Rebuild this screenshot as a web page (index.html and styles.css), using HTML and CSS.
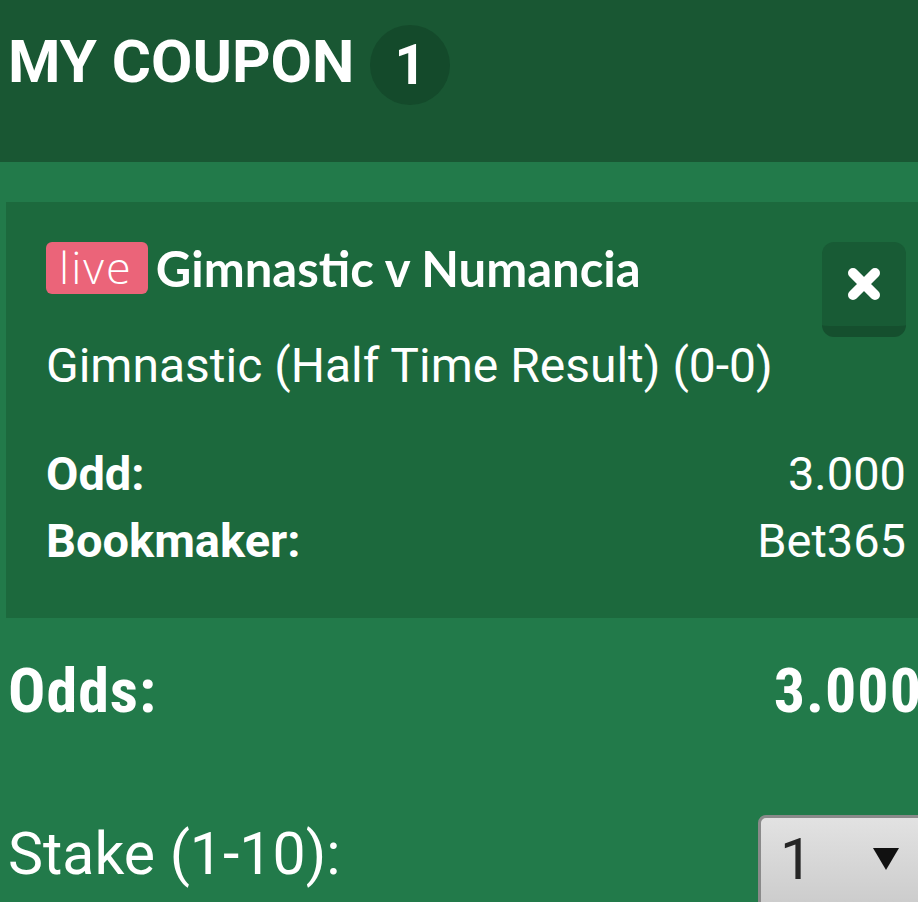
FILE: index.html
```html
<!DOCTYPE html>
<html lang="en">
<head>
<meta charset="utf-8">
<title>My Coupon</title>
<link rel="stylesheet" href="styles.css">
</head>
<body>
<div class="page">
  <header class="header">
    <h1 class="title">MY COUPON</h1>
    <span class="count">1</span>
  </header>

  <section class="card">
    <div class="card-top">
      <div class="card-info">
        <div class="match">
          <span class="live">live</span>
          <span class="match-name">Gimnastic v Numancia</span>
        </div>
        <div class="selection">Gimnastic (Half Time Result) (0-0)</div>
      </div>
      <button class="remove" type="button" aria-label="Remove">
        <svg viewBox="0 0 34 34" width="34" height="34">
          <path d="M6 6 L28 28 M28 6 L6 28" stroke="#ffffff" stroke-width="10" stroke-linecap="round" fill="none"/>
        </svg>
      </button>
    </div>
    <div class="details">
      <div class="row"><span class="label">Odd:</span><span class="value">3.000</span></div>
      <div class="row"><span class="label">Bookmaker:</span><span class="value">Bet365</span></div>
    </div>
  </section>

  <div class="total">
    <span class="total-label">Odds:</span>
    <span class="total-value">3.000</span>
  </div>

  <div class="stake">
    <span class="stake-label">Stake (1-10):</span>
    <div class="select">
      <span class="select-value">1</span>
      <svg class="select-arrow" viewBox="0 0 26 22" width="26" height="22"><polygon points="0,0 26,0 13,22" fill="#111"/></svg>
    </div>
  </div>
</div>
</body>
</html>
```

FILE: styles.css
```css
html, body {
  margin: 0;
  padding: 0;
  overflow: hidden;
  background: #227a4a;
}
body {
  font-family: Roboto, "Liberation Sans", sans-serif;
  color: #ffffff;
}
.page {
  width: 930px;
  height: 902px;
  background: #227a4a;
}
.header {
  height: 162px;
  box-sizing: border-box;
  padding: 25px 0 0 8px;
  background: #195733;
  display: flex;
  align-items: flex-start;
  gap: 16px;
}
.title {
  margin: 0;
  font-size: 60px;
  font-weight: 700;
  line-height: 74px;
  letter-spacing: 0;
}
.count {
  width: 80px;
  height: 80px;
  border-radius: 50%;
  background: #144a2b;
  display: flex;
  align-items: center;
  justify-content: center;
  font-size: 55px;
  font-weight: 700;
}
.card {
  margin: 40px 6px 0 6px;
  padding: 40px 18px 44px 40px;
  background: #1c693d;
}
.card-top {
  display: flex;
  justify-content: space-between;
  align-items: flex-start;
}
.match {
  display: flex;
  align-items: center;
  gap: 8px;
  height: 52px;
}
.live {
  height: 52px;
  box-sizing: border-box;
  padding: 0 15px 0 13px;
  background: #eb6479;
  border-radius: 6px;
  font-family: "Open Sans", sans-serif;
  font-weight: 300;
  font-size: 45px;
  letter-spacing: 2px;
  line-height: 50px;
}
.match-name {
  font-family: Lato, sans-serif;
  font-weight: 700;
  font-size: 49px;
  line-height: 46px;
}
.selection {
  margin-top: 44px;
  font-size: 48px;
  line-height: 56px;
}
.remove {
  width: 84px;
  height: 95px;
  box-sizing: border-box;
  margin: 0;
  padding: 0;
  border: 0;
  border-bottom: 11px solid #154f2e;
  border-radius: 12px;
  background: #185b35;
  display: flex;
  align-items: center;
  justify-content: center;
}
.details {
  margin-top: 46px;
}
.row {
  display: flex;
  justify-content: space-between;
  font-size: 47px;
  line-height: 67px;
}
.label {
  font-weight: 700;
}
.total {
  height: 144px;
  padding: 0 8px;
  display: flex;
  justify-content: space-between;
  align-items: center;
  font-family: "Liberation Sans Narrow", "Roboto Condensed", Roboto, sans-serif;
  font-weight: 700;
  font-size: 62px;
  letter-spacing: 1px;
}
.stake {
  padding: 53px 0 0 8px;
  display: flex;
  justify-content: space-between;
  align-items: flex-start;
}
.stake-label {
  margin-top: 4px;
  font-size: 59px;
  line-height: 70px;
}
.select {
  width: 172px;
  height: 96px;
  box-sizing: border-box;
  border: 3px solid #8a8a8a;
  border-radius: 8px;
  background: linear-gradient(#e2e2e2, #cbcbcb);
  display: flex;
  align-items: center;
  padding-left: 19px;
  gap: 60px;
}
.select-value {
  color: #262626;
  font-size: 58px;
  line-height: 70px;
  margin-top: -8px;
}
.select-arrow {
  margin-top: -8px;
}
```
